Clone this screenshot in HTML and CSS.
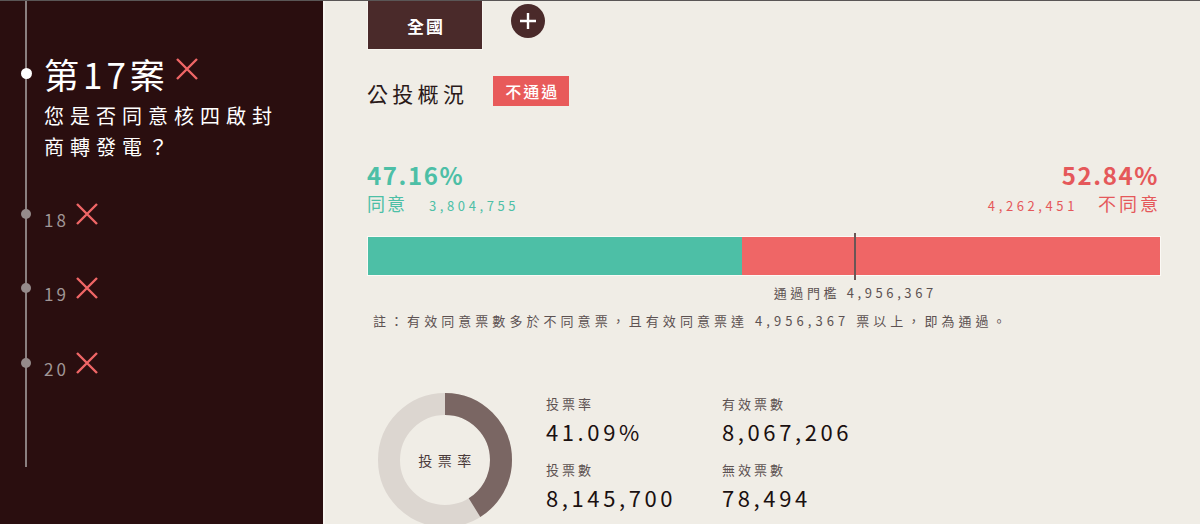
FILE: index.html
```html
<!DOCTYPE html>
<html lang="zh-Hant">
<head>
<meta charset="utf-8">
<title>公投概況</title>
<link rel="stylesheet" href="styles.css">
</head>
<body>
<div class="page">
  <aside class="sidebar">
    <div class="timeline">
      <div class="case current">
        <span class="dot"></span>
        <div class="case-head">
          <span class="case-title">第17案</span>
          <svg class="xmark" viewBox="0 0 22 22"><path d="M1 1 L21 21 M21 1 L1 21"/></svg>
        </div>
        <p class="question">您是否同意核四啟封<br>商轉發電？</p>
      </div>
      <div class="case">
        <span class="dot"></span>
        <div class="case-head">
          <span class="case-num">18</span>
          <svg class="xmark" viewBox="0 0 22 22"><path d="M1 1 L21 21 M21 1 L1 21"/></svg>
        </div>
      </div>
      <div class="case">
        <span class="dot"></span>
        <div class="case-head">
          <span class="case-num">19</span>
          <svg class="xmark" viewBox="0 0 22 22"><path d="M1 1 L21 21 M21 1 L1 21"/></svg>
        </div>
      </div>
      <div class="case">
        <span class="dot"></span>
        <div class="case-head">
          <span class="case-num">20</span>
          <svg class="xmark" viewBox="0 0 22 22"><path d="M1 1 L21 21 M21 1 L1 21"/></svg>
        </div>
      </div>
    </div>
  </aside>
  <main class="main">
    <div class="tabs">
      <div class="tab">全國</div>
      <button class="add"><svg viewBox="0 0 34 34"><path d="M17 9 V25 M9 17 H25"/></svg></button>
    </div>
    <div class="overview">
      <h2 class="overview-title">公投概況</h2>
      <span class="badge">不通過</span>
    </div>
    <div class="results">
      <div class="side agree">
        <div class="pct">47.16%</div>
        <div class="sub"><span class="lbl">同意</span><span class="cnt">3,804,755</span></div>
      </div>
      <div class="side disagree">
        <div class="pct">52.84%</div>
        <div class="sub"><span class="cnt">4,262,451</span><span class="lbl">不同意</span></div>
      </div>
    </div>
    <div class="bar">
      <div class="bar-agree" style="width:47.16%"></div>
      <div class="bar-disagree"></div>
      <div class="threshold" style="left:61.4%"><span class="threshold-label">通過門檻 4,956,367</span></div>
    </div>
    <p class="note">註：有效同意票數多於不同意票，且有效同意票達 4,956,367 票以上，即為通過。</p>
    <div class="stats">
      <div class="donut">
        <svg viewBox="0 0 134 134">
          <circle cx="67" cy="67" r="56" fill="none" stroke="#dcd6d0" stroke-width="22"/>
          <circle cx="67" cy="67" r="56" fill="none" stroke="#7a6663" stroke-width="22" stroke-dasharray="144.6 351.9" transform="rotate(-90 67 67)"/>
        </svg>
        <span class="donut-label">投票率</span>
      </div>
      <div class="stat-grid">
        <div class="stat"><div class="stat-lbl">投票率</div><div class="stat-val">41.09%</div></div>
        <div class="stat"><div class="stat-lbl">有效票數</div><div class="stat-val">8,067,206</div></div>
        <div class="stat"><div class="stat-lbl">投票數</div><div class="stat-val">8,145,700</div></div>
        <div class="stat"><div class="stat-lbl">無效票數</div><div class="stat-val">78,494</div></div>
      </div>
    </div>
  </main>
</div>
</body>
</html>
```
FILE: styles.css
```css
* { box-sizing: border-box; }
html, body { margin: 0; padding: 0; }
body {
  font-family: "Noto Sans CJK TC", "Noto Sans", sans-serif;
  background: #f0ede6;
  border-top: 1px solid #5a5656;
  height: 524px;
  overflow: hidden;
}
.page { display: flex; height: 523px; }

.sidebar {
  width: 325px;
  flex: none;
  background: #2a0e0f;
  border-right: 2px solid #f7f5f0;
  color: #fff;
}
.timeline {
  position: relative;
  height: 466px;
  padding-top: 52px;
}
.timeline::before {
  content: "";
  position: absolute;
  left: 25px;
  top: 0;
  bottom: 0;
  width: 2px;
  background: #8a7f7f;
}
.case { position: relative; padding-left: 44px; }
.dot {
  position: absolute;
  left: 21px;
  width: 10px;
  height: 10px;
  border-radius: 50%;
  background: #958b8b;
  top: 50%;
  margin-top: -5px;
}
.case.current .dot { background: #fff; top: 15px; margin-top: 0; left: 21px; width: 11px; height: 11px; }
.case-head { display: flex; align-items: center; }
.case-title {
  font-size: 35px;
  line-height: 42px;
  letter-spacing: 4px;
  color: #fff;
}
.xmark { width: 22px; height: 22px; fill: none; stroke: #ef6666; stroke-width: 2.4; flex: none; }
.case.current .xmark { margin-left: 7px; margin-top: -10px; }
.question {
  margin: 5px 0 0;
  font-size: 20px;
  line-height: 31px;
  letter-spacing: 6px;
  color: #fff;
}
.case:nth-child(2) { margin-top: 37px; }
.case:nth-child(3) { margin-top: 45px; }
.case:nth-child(4) { margin-top: 46px; }
.case-num {
  font-size: 17px;
  line-height: 17px;
  padding-top: 12px;
  letter-spacing: 3px;
  color: #a09696;
  margin-right: 7px;
}

.main { flex: 1; padding: 0 39px 0 42px; }
.tabs { display: flex; align-items: flex-start; }
.tab {
  width: 116px;
  height: 49px;
  background: #4a2a2a;
  border: 1px solid #f7f5f0;
  border-top: 0;
  color: #fff;
  font-weight: bold;
  font-size: 17px;
  letter-spacing: 2px;
  padding-left: 2px;
  display: flex;
  align-items: center;
  justify-content: center;
}
.add {
  margin: 3px 0 0 28px;
  width: 34px;
  height: 34px;
  border-radius: 50%;
  border: 0;
  padding: 0;
  background: #4a2a2a;
  display: flex;
}
.add svg { width: 34px; height: 34px; fill: none; stroke: #fff; stroke-width: 2.4; }

.overview { display: flex; align-items: center; margin-top: 28px; }
.overview-title {
  margin: 0;
  font-weight: normal;
  font-size: 21px;
  letter-spacing: 4.3px;
  color: #2a1a1a;
  line-height: 30px;
}
.badge {
  margin-left: 25px;
  margin-top: -5px;
  background: #e85a5a;
  color: #fff;
  font-size: 16px;
  font-weight: 500;
  line-height: 20px;
  letter-spacing: 2px;
  padding-left: 2px;
  height: 30px;
  min-height: 30px;
  width: 76px;
  flex: none;
  display: flex;
  align-items: center;
  justify-content: center;
}

.results { display: flex; justify-content: space-between; margin-top: 52px; }
.side { display: flex; flex-direction: column; }
.disagree { align-items: flex-end; }
.pct { font-size: 24px; font-weight: 600; letter-spacing: 1.6px; line-height: 30px; }
.agree { color: #4dbfa6; }
.disagree { color: #e5585a; margin-right: 2px; }
.sub { display: flex; align-items: baseline; line-height: 26px; }
.lbl { font-size: 18px; letter-spacing: 2px; }
.cnt { font-size: 13px; letter-spacing: 3.6px; }
.agree .cnt { margin-left: 22px; }
.disagree .cnt { margin-right: 20px; }
.disagree .lbl { letter-spacing: 3px; margin-right: -2px; }

.bar {
  position: relative;
  display: flex;
  height: 40px;
  margin-top: 17px;
  border: 1px solid #fbf9f5;
}
.bar-agree { background: #4dbfa6; }
.bar-disagree { flex: 1; background: #ef6666; }
.threshold {
  position: absolute;
  top: -4px;
  width: 2px;
  height: 47px;
  background: #6a5656;
}
.threshold-label {
  position: absolute;
  top: 51px;
  left: 1px;
  transform: translateX(-50%);
  white-space: nowrap;
  font-size: 13px;
  letter-spacing: 3.6px;
  color: #5d5252;
  line-height: 18px;
}
.note {
  margin: 36px 0 0 6px;
  font-size: 13px;
  letter-spacing: 4.05px;
  color: #5d5252;
  line-height: 18px;
}

.stats { display: flex; align-items: flex-start; margin-top: 63px; }
.donut { position: relative; width: 134px; height: 134px; margin-left: 11px; flex: none; }
.donut svg { width: 134px; height: 134px; display: block; }
.donut-label {
  position: absolute;
  inset: 0;
  display: flex;
  align-items: center;
  justify-content: center;
  font-size: 14px;
  letter-spacing: 5.5px;
  padding-left: 5px;
  color: #4a3a3a;
}
.stat-grid {
  margin-left: 34px;
  margin-top: 1px;
  display: grid;
  grid-template-columns: 176px 176px;
  row-gap: 14px;
}
.stat-lbl { font-size: 13px; letter-spacing: 3px; color: #5d5252; line-height: 20px; }
.stat-val { font-size: 22px; letter-spacing: 3.6px; color: #1a1010; line-height: 30px; margin-top: 2px; }
```
